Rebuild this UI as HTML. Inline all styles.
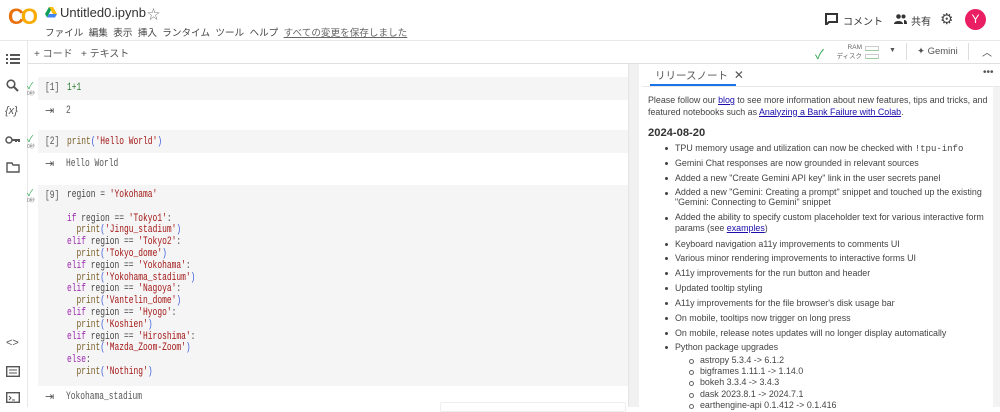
<!DOCTYPE html>
<html><head><meta charset="utf-8"><style>
*{margin:0;padding:0;box-sizing:border-box}
body{width:1000px;height:407px;overflow:hidden;background:#fff;font-family:"Liberation Sans","Noto Sans CJK JP",sans-serif;color:#444;position:relative}
.a{position:absolute}
.mono{font-family:"Liberation Mono","Noto Sans CJK JP",monospace;font-size:11px;letter-spacing:0;transform:scaleX(0.72);transform-origin:left top;white-space:pre}
.cell{position:absolute;left:38px;width:590px;background:#f5f5f5}
.n{color:#555}
.s{color:#a31515}
.k{color:#9c27b0}
.f{color:#795e26}
.p{color:#3b5bdb}
.chk{position:absolute;left:27px;font-size:9px;color:#34a853;line-height:8px}
.chk i{display:block;font-style:normal;font-size:5px;color:#777}
ul{list-style:none}
.rn li{position:relative;padding-left:27px;font-size:8.9px;color:#444;height:14.85px;line-height:13px;white-space:nowrap}
.rn li:before{content:"";position:absolute;left:17px;top:5px;width:3px;height:3px;border-radius:50%;background:#444}
.sub li{position:relative;padding-left:52px;font-size:8.9px;color:#444;height:11.2px;line-height:11px}
.sub li:before{content:"";position:absolute;left:41px;top:4px;width:3px;height:3px;border-radius:50%;border:1px solid #666}
a{color:#1a0dab;text-decoration:underline}
</style></head><body>
<!-- header -->
<div class="a" style="left:8px;top:5px;font-weight:bold;font-size:22px;letter-spacing:-3px;line-height:24px">
<span style="color:#e8710a">C</span><span style="color:#f9ab00">O</span></div>
<svg class="a" style="left:45px;top:7px" width="12" height="11" viewBox="0 0 12 11"><path d="M4 0h4l4 7H8z" fill="#fbbc04"/><path d="M4 0L0 7l2 3.5L6 3z" fill="#0f9d58"/><path d="M2 10.5h8l2-3.5H4z" fill="#4285f4"/></svg>
<div class="a" style="left:60px;top:5px;font-size:13px;color:#333">Untitled0.ipynb</div>
<div class="a" style="left:147px;top:4px;font-size:13px;color:#777">☆</div>
<div class="a" style="left:45px;top:25px;font-size:9.6px;color:#444;white-space:nowrap">ファイル&nbsp;&nbsp;編集&nbsp;&nbsp;表示&nbsp;&nbsp;挿入&nbsp;&nbsp;ランタイム&nbsp;&nbsp;ツール&nbsp;&nbsp;ヘルプ&nbsp;&nbsp;<span style="text-decoration:underline;color:#666">すべての変更を保存しました</span></div>
<svg class="a" style="left:825px;top:13px" width="13" height="12" viewBox="0 0 13 12"><path d="M1 1h11v8H4l-3 3z" fill="none" stroke="#333" stroke-width="2"/></svg>
<div class="a" style="left:843px;top:13px;font-size:10px;color:#333">コメント</div>
<svg class="a" style="left:894px;top:14px" width="13" height="10" viewBox="0 0 13 10"><circle cx="4.5" cy="2.5" r="2.3" fill="#333"/><path d="M0 10c0-4 9-4 9 0z" fill="#333"/><circle cx="9.5" cy="2.5" r="2" fill="#333"/><path d="M10 6c2 0 3 1 3 4h-3z" fill="#333"/></svg>
<div class="a" style="left:911px;top:13px;font-size:10px;color:#333">共有</div>
<div class="a" style="left:940px;top:10px;font-size:15px;color:#444">⚙</div>
<div class="a" style="left:965px;top:9px;width:21px;height:21px;border-radius:50%;background:#e91e63;color:#fff;font-size:12px;text-align:center;line-height:21px">Y</div>
<div class="a" style="left:0;top:40px;width:1000px;height:1px;background:#e8e8e8"></div>
<!-- toolbar -->
<div class="a" style="left:34px;top:45px;font-size:10px;color:#555">+ コード&nbsp;&nbsp; + テキスト</div>
<div class="a" style="left:28px;top:63px;width:972px;height:1px;background:#e0e0e0"></div>
<div class="a" style="left:815px;top:44px;font-size:13px;color:#34a853">✓</div>
<div class="a" style="left:826px;top:43px;width:36px;font-size:6.5px;color:#666;line-height:9px;text-align:right;white-space:nowrap">RAM<br>ディスク</div>
<div class="a" style="left:865px;top:46px;width:14px;height:5px;border:1px solid #ccc;border-bottom-color:#9ccc9c"></div>
<div class="a" style="left:865px;top:54px;width:14px;height:5px;border:1px solid #ccc;border-bottom-color:#9ccc9c"></div>
<div class="a" style="left:889px;top:47px;font-size:7px;color:#555">▼</div>
<div class="a" style="left:906px;top:43px;width:1px;height:17px;background:#ddd"></div>
<div class="a" style="left:917px;top:46px;font-size:9.5px;color:#555">✦ Gemini</div>
<div class="a" style="left:968px;top:43px;width:1px;height:17px;background:#ddd"></div>
<div class="a" style="left:982px;top:44px;font-size:10px;color:#444">︿</div>
<!-- sidebar -->
<div class="a" style="left:27px;top:41px;width:1px;height:366px;background:#e8e8e8"></div>
<svg class="a" style="left:6px;top:53px" width="14" height="12"><g fill="#555"><rect x="0" y="1" width="2" height="2"/><rect x="0" y="5" width="2" height="2"/><rect x="0" y="9" width="2" height="2"/><rect x="4" y="1" width="10" height="2"/><rect x="4" y="5" width="10" height="2"/><rect x="4" y="9" width="10" height="2"/></g></svg>
<svg class="a" style="left:6px;top:79px" width="13" height="13"><circle cx="5" cy="5" r="3.8" fill="none" stroke="#555" stroke-width="1.6"/><path d="M8 8l4 4" stroke="#555" stroke-width="2"/></svg>
<div class="a" style="left:5px;top:105px;font-size:11px;color:#555;font-style:italic">{x}</div>
<svg class="a" style="left:5px;top:136px" width="16" height="8"><circle cx="4" cy="4" r="3" fill="none" stroke="#555" stroke-width="1.5"/><path d="M7 3h8v3h-2v-1h-1v1h-2v-1H7" fill="#555"/></svg>
<svg class="a" style="left:6px;top:162px" width="14" height="11"><path d="M1 1h5l1 2h6v7H1z" fill="none" stroke="#555" stroke-width="1.4"/></svg>
<div class="a" style="left:6px;top:337px;font-size:11px;color:#555">&lt;&gt;</div>
<svg class="a" style="left:6px;top:366px" width="14" height="11"><rect x="0.7" y="0.7" width="12.6" height="9.6" fill="none" stroke="#555" stroke-width="1.4"/><path d="M3 4h8M3 7h8" stroke="#555"/></svg>
<svg class="a" style="left:6px;top:392px" width="14" height="11"><rect x="0.7" y="0.7" width="12.6" height="9.6" fill="none" stroke="#555" stroke-width="1.4"/><path d="M3 4l2 2-2 2M6 8h3" stroke="#555" fill="none"/></svg>
<!-- cells -->
<div class="cell" style="top:77px;height:23px"></div>
<div class="chk" style="top:82px">✓<i>0秒</i></div>
<div class="a mono n" style="left:45px;top:82px">[1]</div>
<div class="a mono" style="left:67px;top:82px;color:#2e7d32">1+1</div>
<div class="a n" style="left:45px;top:104px;font-size:11px">⇥</div>
<div class="a mono n" style="left:66px;top:105px">2</div>

<div class="cell" style="top:130px;height:23px"></div>
<div class="chk" style="top:135px">✓<i>0秒</i></div>
<div class="a mono n" style="left:45px;top:136px">[2]</div>
<div class="a mono" style="left:67px;top:136px"><span class="f">print</span><span class="p">(</span><span class="s">'Hello World'</span><span class="p">)</span></div>
<div class="a n" style="left:45px;top:157px;font-size:11px">⇥</div>
<div class="a mono n" style="left:66px;top:158px">Hello World</div>

<div class="cell" style="top:185px;height:201px"></div>
<div class="chk" style="top:189px">✓<i>0秒</i></div>
<div class="a mono n" style="left:45px;top:190px">[9]</div>
<pre class="a mono" style="left:67px;top:190px;line-height:11.8px;color:#444">region = <span class="s">'Yokohama'</span>

<span class="k">if</span> region == <span class="s">'Tokyo1'</span>:
  <span class="f">print</span><span class="p">(</span><span class="s">'Jingu_stadium'</span><span class="p">)</span>
<span class="k">elif</span> region == <span class="s">'Tokyo2'</span>:
  <span class="f">print</span><span class="p">(</span><span class="s">'Tokyo_dome'</span><span class="p">)</span>
<span class="k">elif</span> region == <span class="s">'Yokohama'</span>:
  <span class="f">print</span><span class="p">(</span><span class="s">'Yokohama_stadium'</span><span class="p">)</span>
<span class="k">elif</span> region == <span class="s">'Nagoya'</span>:
  <span class="f">print</span><span class="p">(</span><span class="s">'Vantelin_dome'</span><span class="p">)</span>
<span class="k">elif</span> region == <span class="s">'Hyogo'</span>:
  <span class="f">print</span><span class="p">(</span><span class="s">'Koshien'</span><span class="p">)</span>
<span class="k">elif</span> region == <span class="s">'Hiroshima'</span>:
  <span class="f">print</span><span class="p">(</span><span class="s">'Mazda_Zoom-Zoom'</span><span class="p">)</span>
<span class="k">else</span>:
  <span class="f">print</span><span class="p">(</span><span class="s">'Nothing'</span><span class="p">)</span></pre>
<div class="a n" style="left:45px;top:390px;font-size:11px">⇥</div>
<div class="a mono n" style="left:66px;top:391px">Yokohama_stadium</div>
<div class="a" style="left:440px;top:402px;width:186px;height:10px;border:1px solid #eee;border-radius:2px"></div>
<!-- scrollbar / divider -->
<div class="a" style="left:628px;top:64px;width:11px;height:343px;background:#f1f1f1;border-left:1px solid #e4e4e4"></div>
<!-- right panel -->
<div class="a" style="left:655px;top:68px;font-size:10.5px;color:#555">リリースノート&nbsp; <span style="font-size:12px">✕</span></div>
<div class="a" style="left:650px;top:84px;width:86px;height:2px;background:#1a73e8"></div>
<div class="a" style="left:983px;top:67px;font-size:10px;color:#555">•••</div>
<div class="a" style="left:642px;top:86px;width:358px;height:1px;background:#e8e8e8"></div>
<div class="a" style="left:993px;top:87px;width:7px;height:320px;background:#f3f3f3"></div>
<div class="a" style="left:648px;top:95px;width:345px;font-size:8.9px;line-height:11.5px;color:#444">Please follow our <a>blog</a> to see more information about new features, tips and tricks, and featured notebooks such as <a>Analyzing a Bank Failure with Colab</a>.</div>
<div class="a" style="left:648px;top:127px;font-size:11.2px;font-weight:bold;color:#333">2024-08-20</div>
<ul class="a rn" style="left:648px;top:142px;width:345px">
<li>TPU memory usage and utilization can now be checked with <span style="font-family:'Liberation Mono',monospace;font-size:9px">!tpu-info</span></li>
<li>Gemini Chat responses are now grounded in relevant sources</li>
<li>Added a new "Create Gemini API key" link in the user secrets panel</li>
<li style="height:25.5px;line-height:10.5px">Added a new "Gemini: Creating a prompt" snippet and touched up the existing<br>"Gemini: Connecting to Gemini" snippet</li>
<li style="height:25.5px;line-height:10.5px">Added the ability to specify custom placeholder text for various interactive form<br>params (see <a>examples</a>)</li>
<li>Keyboard navigation a11y improvements to comments UI</li>
<li>Various minor rendering improvements to interactive forms UI</li>
<li>A11y improvements for the run button and header</li>
<li>Updated tooltip styling</li>
<li>A11y improvements for the file browser's disk usage bar</li>
<li>On mobile, tooltips now trigger on long press</li>
<li>On mobile, release notes updates will no longer display automatically</li>
<li>Python package upgrades</li>
</ul>
<ul class="a sub" style="left:648px;top:355px;width:345px">
<li>astropy 5.3.4 -&gt; 6.1.2</li>
<li>bigframes 1.11.1 -&gt; 1.14.0</li>
<li>bokeh 3.3.4 -&gt; 3.4.3</li>
<li>dask 2023.8.1 -&gt; 2024.7.1</li>
<li>earthengine-api 0.1.412 -&gt; 0.1.416</li>
</ul>
</body></html>
